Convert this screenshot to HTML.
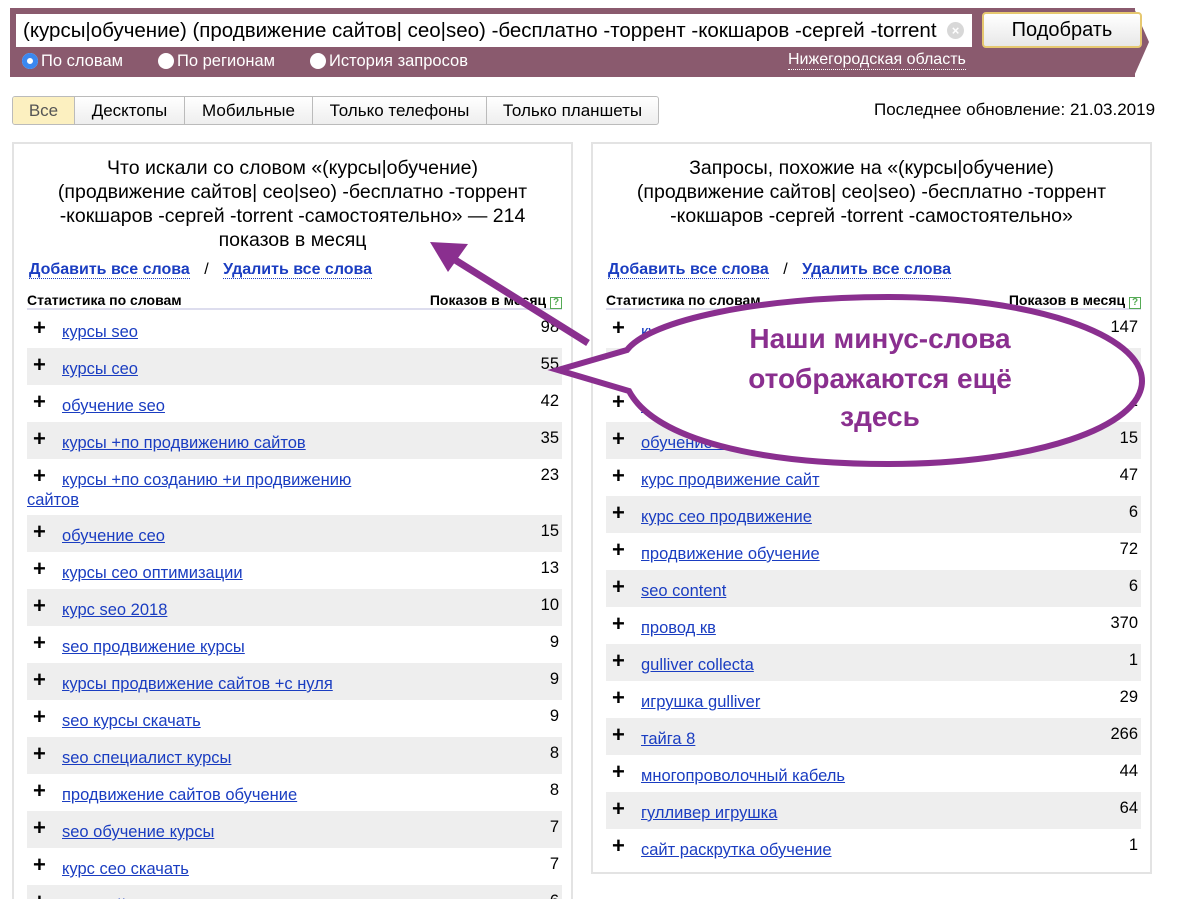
<!DOCTYPE html>
<html><head><meta charset="utf-8"><style>
*{box-sizing:border-box;margin:0;padding:0}
html,body{width:1200px;height:899px;overflow:hidden}
body{background:#fff;font-family:"Liberation Sans",Arial,sans-serif;color:#000;position:relative}
.abs{position:absolute}
.bar{left:10px;top:8px;width:1125px;height:69px;background:#8a5a6e}
.tip{left:1134px;top:8px;width:0;height:0;border-top:34.5px solid transparent;border-bottom:34.5px solid transparent;border-left:15px solid #8a5a6e}
.inp{left:16px;top:14px;width:956px;height:33px;background:#fff;font-size:20.5px;line-height:33px;padding-left:7px;white-space:nowrap;overflow:hidden}
.clr{left:947px;top:22px;width:17px;height:17px;border-radius:50%;background:#d8d8d8;color:#fff;font-size:13px;line-height:17px;text-align:center;font-weight:bold}
.btn{left:982px;top:12px;width:160px;height:36px;background:linear-gradient(#fff,#e8e8e8);border:2px solid #e6c870;border-radius:4px;font-size:20px;line-height:32px;text-align:center}
.rad{top:52px;font-size:16.5px;color:#fff;line-height:18px}
.rad i{display:inline-block;width:16px;height:16px;border-radius:50%;background:#fff;vertical-align:-3px;margin-right:3px}
.reg{left:788px;top:51px;font-size:16px;color:#fff;border-bottom:1px dotted #fff}
.tabs{left:12px;top:96px;height:29px;display:flex;border:1px solid #bbb;border-radius:3px;overflow:hidden;background:linear-gradient(#fff,#eee)}
.tabs div{font-size:17px;line-height:27px;text-align:center;border-left:1px solid #bbb}
.tabs div:first-child{border-left:none;background:#fcf0c0;color:#555}
.upd{left:874px;top:100px;font-size:17px}
.panel{border:2px solid #e3e3e3;background:#fff}
.title{text-align:center;font-size:19.5px;line-height:24px}
.links{font-size:16px;font-weight:bold;color:#1a3dc1}
.links span{border-bottom:1px dotted #1a3dc1}
.hdr{font-size:14px;font-weight:bold;border-bottom:2px solid #dde;height:14px}
.q{display:inline-block;width:12px;height:12px;border:1px solid #5a5;color:#5a5;font-size:10px;line-height:10px;text-align:center;vertical-align:0}
.row{position:absolute;left:0;width:100%;font-size:16.5px}
.row.g{background:#eee}
.row b{position:absolute;left:6px;top:9px;font-size:22px;line-height:16px}
.row a{position:absolute;left:35px;top:11px;color:#1a3dc1;text-decoration:underline;line-height:20px}
.row em{position:absolute;right:3px;top:7px;font-style:normal}
</style></head><body>
<div class="abs bar"></div><div class="abs tip"></div>
<div class="abs inp">(курсы|обучение) (продвижение сайтов| сео|seo) -бесплатно -торрент -кокшаров -сергей -torrent</div>
<div class="abs clr">×</div>
<div class="abs btn">Подобрать</div>
<div class="abs rad" style="left:22px"><i style="background:#3b88f0;box-shadow:inset 0 0 0 5px #3b88f0,inset 0 0 0 8px #fff"></i>По словам</div>
<div class="abs rad" style="left:158px"><i></i>По регионам</div>
<div class="abs rad" style="left:310px"><i></i>История запросов</div>
<div class="abs reg">Нижегородская область</div>
<div class="abs tabs"><div style="width:61px">Все</div><div style="width:110px">Десктопы</div><div style="width:128px">Мобильные</div><div style="width:174px">Только телефоны</div><div style="width:172px">Только планшеты</div></div>
<div class="abs upd">Последнее обновление: 21.03.2019</div>

<div class="abs panel" style="left:12px;top:142px;width:561px;height:770px">
<div class="title" style="margin-top:12px">Что искали со словом «(курсы|обучение)<br>(продвижение сайтов| сео|seo) -бесплатно -торрент<br>-кокшаров -сергей -torrent -самостоятельно» — 214<br>показов в месяц</div>
<div class="links abs" style="left:15px;top:117px"><span>Добавить все слова</span> <span style="border:none;color:#000;font-weight:normal;margin:0 10px">/</span> <span>Удалить все слова</span></div>
<div class="abs hdr" style="left:13px;top:148px;width:535px;height:18px">Статистика по словам<span style="position:absolute;right:0">Показов в месяц <span class="q">?</span></span></div>
<div class="abs" style="left:13px;top:167px;width:535px;height:600px">
<div class="row" style="top:0;height:37px"><b>+</b><a>курсы seo</a><em>98</em></div>
<div class="row g" style="top:37px;height:37px"><b>+</b><a>курсы сео</a><em>55</em></div>
<div class="row" style="top:74px;height:37px"><b>+</b><a>обучение seo</a><em>42</em></div>
<div class="row g" style="top:111px;height:37px"><b>+</b><a>курсы +по продвижению сайтов</a><em>35</em></div>
<div class="row" style="top:148px;height:56px"><b>+</b><a>курсы +по созданию +и продвижению</a><a style="left:0px;top:31px">сайтов</a><em>23</em></div>
<div class="row g" style="top:204px;height:37px"><b>+</b><a>обучение сео</a><em>15</em></div>
<div class="row" style="top:241px;height:37px"><b>+</b><a>курсы сео оптимизации</a><em>13</em></div>
<div class="row g" style="top:278px;height:37px"><b>+</b><a>курс seo 2018</a><em>10</em></div>
<div class="row" style="top:315px;height:37px"><b>+</b><a>seo продвижение курсы</a><em>9</em></div>
<div class="row g" style="top:352px;height:37px"><b>+</b><a>курсы продвижение сайтов +с нуля</a><em>9</em></div>
<div class="row" style="top:389px;height:37px"><b>+</b><a>seo курсы скачать</a><em>9</em></div>
<div class="row g" style="top:426px;height:37px"><b>+</b><a>seo специалист курсы</a><em>8</em></div>
<div class="row" style="top:463px;height:37px"><b>+</b><a>продвижение сайтов обучение</a><em>8</em></div>
<div class="row g" style="top:500px;height:37px"><b>+</b><a>seo обучение курсы</a><em>7</em></div>
<div class="row" style="top:537px;height:37px"><b>+</b><a>курс сео скачать</a><em>7</em></div>
<div class="row g" style="top:574px;height:37px"><b>+</b><a>курс сайт</a><em>6</em></div>
</div></div>

<div class="abs panel" style="left:591px;top:142px;width:561px;height:732px">
<div class="title" style="margin-top:12px">Запросы, похожие на «(курсы|обучение)<br>(продвижение сайтов| сео|seo) -бесплатно -торрент<br>-кокшаров -сергей -torrent -самостоятельно»</div>
<div class="links abs" style="left:15px;top:117px"><span>Добавить все слова</span> <span style="border:none;color:#000;font-weight:normal;margin:0 10px">/</span> <span>Удалить все слова</span></div>
<div class="abs hdr" style="left:13px;top:148px;width:535px;height:18px">Статистика по словам<span style="position:absolute;right:0">Показов в месяц <span class="q">?</span></span></div>
<div class="abs" style="left:13px;top:167px;width:535px;height:560px">
<div class="row" style="top:0;height:37px"><b>+</b><a>курсы seo</a><em>147</em></div>
<div class="row g" style="top:37px;height:37px"><b>+</b><a>seo</a><em>9</em></div>
<div class="row" style="top:74px;height:37px"><b>+</b><a>курсы</a><em>2</em></div>
<div class="row g" style="top:111px;height:37px"><b>+</b><a>обучение seo</a><em>15</em></div>
<div class="row" style="top:148px;height:37px"><b>+</b><a>курс продвижение сайт</a><em>47</em></div>
<div class="row g" style="top:185px;height:37px"><b>+</b><a>курс сео продвижение</a><em>6</em></div>
<div class="row" style="top:222px;height:37px"><b>+</b><a>продвижение обучение</a><em>72</em></div>
<div class="row g" style="top:259px;height:37px"><b>+</b><a>seo content</a><em>6</em></div>
<div class="row" style="top:296px;height:37px"><b>+</b><a>провод кв</a><em>370</em></div>
<div class="row g" style="top:333px;height:37px"><b>+</b><a>gulliver collecta</a><em>1</em></div>
<div class="row" style="top:370px;height:37px"><b>+</b><a>игрушка gulliver</a><em>29</em></div>
<div class="row g" style="top:407px;height:37px"><b>+</b><a>тайга 8</a><em>266</em></div>
<div class="row" style="top:444px;height:37px"><b>+</b><a>многопроволочный кабель</a><em>44</em></div>
<div class="row g" style="top:481px;height:37px"><b>+</b><a>гулливер игрушка</a><em>64</em></div>
<div class="row" style="top:518px;height:37px"><b>+</b><a>сайт раскрутка обучение</a><em>1</em></div>
</div></div>

<svg class="abs" style="left:0;top:0" width="1200" height="899">
<line x1="588" y1="343" x2="452" y2="258" stroke="#8a2f8f" stroke-width="7"/>
<polygon points="430,242 468,244 448,272" fill="#8a2f8f"/>
<path d="M627,350 C650,320 760,297 888,297 C1035,297 1142,335 1142,381 C1142,427 1035,464 888,464 C760,464 655,440 629,391 L558,370 Z" fill="#fff" stroke="#8a2f8f" stroke-width="6" stroke-linejoin="miter"/>
<text x="880" y="348" text-anchor="middle" font-family="Liberation Sans,sans-serif" font-weight="bold" font-size="28" fill="#8a2f8f">Наши минус-слова</text>
<text x="880" y="388" text-anchor="middle" font-family="Liberation Sans,sans-serif" font-weight="bold" font-size="28" fill="#8a2f8f">отображаются ещё</text>
<text x="880" y="426" text-anchor="middle" font-family="Liberation Sans,sans-serif" font-weight="bold" font-size="28" fill="#8a2f8f">здесь</text>
</svg>
</body></html>
